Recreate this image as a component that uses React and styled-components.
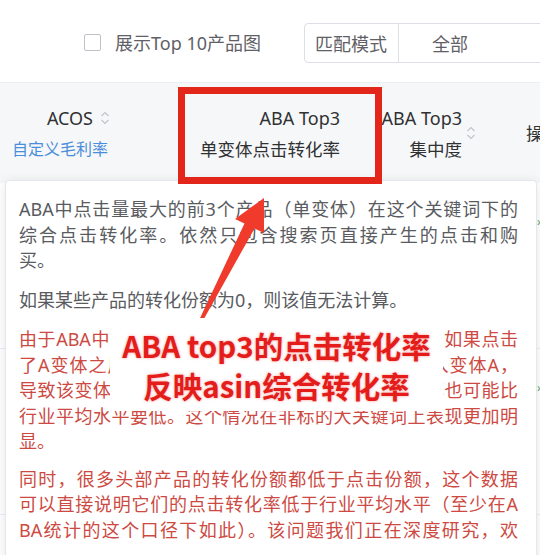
import React from "react";
import styled, { createGlobalStyle } from "styled-components";

const GlobalStyle = createGlobalStyle`
  html, body { margin: 0; padding: 0; background: #fff; }
  body { font-family: "Noto Sans", "Noto Sans CJK SC", sans-serif; }
`;

const Page = styled.div`
  position: relative;
  width: 540px;
  height: 555px;
  overflow: hidden;
  background: #fff;
`;

const Toolbar = styled.div`
  display: flex;
  align-items: center;
  height: 83px;
  box-sizing: border-box;
  padding: 3px 0 0 84px;
  border-bottom: 1px solid #eceef2;
`;

const Checkbox = styled.span`
  flex: none;
  width: 17px;
  height: 17px;
  box-sizing: border-box;
  border: 1px solid #bfc2c8;
  border-radius: 2px;
  background: #fff;
`;

const CheckLabel = styled.span`
  margin-left: 14px;
  font-size: 18px;
  line-height: 24px;
  color: #5f6166;
  white-space: nowrap;
`;

const SelectGroup = styled.div`
  flex: none;
  display: flex;
  align-items: stretch;
  margin-left: 43px;
  width: 280px;
  height: 40px;
  box-sizing: border-box;
  border: 1px solid #dcdfe6;
  border-radius: 4px;
  font-size: 18px;
  color: #5f6166;
`;

const Prefix = styled.span`
  display: flex;
  align-items: center;
  padding: 0 11px 0 10px;
  border-right: 1px solid #dcdfe6;
  white-space: nowrap;
`;

const Value = styled.span`
  display: flex;
  align-items: center;
  padding-left: 33px;
  white-space: nowrap;
`;

const Header = styled.div`
  display: flex;
  align-items: center;
  height: 100px;
  background: #f6f7f9;
  color: #303133;
`;

const HeaderCell = styled.div`
  flex: none;
  display: flex;
  align-items: center;
  justify-content: ${(p) => (p.$start ? "flex-start" : "flex-end")};
  width: ${(p) => (p.$w ? `${p.$w}px` : "auto")};
  box-sizing: border-box;
  padding-right: ${(p) => p.$pr || 0}px;
  padding-left: ${(p) => p.$pl || 0}px;
`;

const Stack = styled.div`
  display: flex;
  flex-direction: column;
  align-items: flex-end;
  gap: 7px;
`;

const TitleRow = styled.div`
  display: flex;
  align-items: center;
  gap: 7px;
`;

const HeadText = styled.span`
  font-size: ${(p) => p.$size || 18}px;
  line-height: 24px;
  white-space: nowrap;
`;

const LinkText = styled.span`
  margin-right: 2px;
  font-size: 16px;
  line-height: 24px;
  color: #4a8edb;
  white-space: nowrap;
`;

const SortWrap = styled.span`
  display: inline-flex;
  margin-left: ${(p) => p.$ml || 0}px;
`;

const Body = styled.div`
  display: flex;
  flex-direction: column;
`;

const BodyRow = styled.div`
  display: flex;
  justify-content: flex-end;
  height: 166px;
  box-sizing: border-box;
  padding-top: ${(p) => p.$pt}px;
  border-bottom: 1px solid #ebeef5;
`;

const Mark = styled.span`
  width: 3px;
  height: 10px;
  color: #5aa86a;
  font-size: 12px;
  line-height: 10px;
  overflow: hidden;
`;

const Popover = styled.div`
  position: absolute;
  left: 5px;
  top: 180px;
  width: 532px;
  height: 420px;
  box-sizing: border-box;
  background: #fff;
  border: 1px solid #e4e7ed;
  border-radius: 4px;
  box-shadow: 0 2px 12px rgba(0, 0, 0, 0.1);
  padding: 16px 18px 0 13px;
  font-family: "Noto Sans", "Noto Sans CJK SC", sans-serif;
  font-size: 18px;
  line-height: 25.5px;
`;

const Para = styled.p`
  margin: 0 0 ${(p) => p.$mb ?? 14}px;
  color: ${(p) => (p.$red ? "#cd4a43" : "#595b60")};
`;

const Line = styled.span`
  display: block;
  text-align: ${(p) => (p.$full ? "justify" : "left")};
  text-align-last: ${(p) => (p.$full ? "justify" : "auto")};
`;

const RedBox = styled.div`
  position: absolute;
  left: 178px;
  top: 87px;
  width: 204px;
  height: 97px;
  box-sizing: border-box;
  border: 7px solid #e3261a;
`;

const ArrowSvg = styled.svg`
  position: absolute;
  left: 0;
  top: 0;
  pointer-events: none;
`;

const Callout = styled.div`
  position: absolute;
  left: 110px;
  top: 318px;
  width: 333px;
  height: 93px;
  background: #fff;
  display: flex;
  flex-direction: column;
  align-items: center;
  justify-content: center;
`;

const CalloutText = styled.div`
  font-family: "Noto Sans CJK SC", sans-serif;
  font-weight: 700;
  font-size: 29.5px;
  line-height: 40px;
  color: #e41d1b;
  text-shadow: 0 0 3px rgba(235, 40, 40, 0.45);
  white-space: nowrap;
`;

const SortIcon = () => (
  <svg width="10" height="16" viewBox="0 0 10 16">
    <polyline points="1.5,6 5,2.5 8.5,6" fill="none" stroke="#c0c4cc" strokeWidth="1.2" />
    <polyline points="1.5,10 5,13.5 8.5,10" fill="none" stroke="#c0c4cc" strokeWidth="1.2" />
  </svg>
);

export default function App() {
  return (
    <Page>
      <GlobalStyle />
      <Toolbar>
        <Checkbox />
        <CheckLabel>展示Top 10产品图</CheckLabel>
        <SelectGroup>
          <Prefix>匹配模式</Prefix>
          <Value>全部</Value>
        </SelectGroup>
      </Toolbar>

      <Header>
        <HeaderCell $w={112} $pr={2}>
          <Stack>
            <TitleRow>
              <HeadText>ACOS</HeadText>
              <SortIcon />
            </TitleRow>
            <LinkText>自定义毛利率</LinkText>
          </Stack>
        </HeaderCell>
        <HeaderCell $w={230} $pr={2}>
          <Stack>
            <HeadText>ABA Top3</HeadText>
            <HeadText $size={17.5}>单变体点击转化率</HeadText>
          </Stack>
        </HeaderCell>
        <HeaderCell $w={138} $pr={4}>
          <Stack>
            <HeadText>ABA Top3</HeadText>
            <HeadText $size={17.5}>集中度</HeadText>
          </Stack>
          <SortWrap $ml={4}>
            <SortIcon />
          </SortWrap>
        </HeaderCell>
        <HeaderCell $start $pl={46}>
          <HeadText $size={17.5}>操作</HeadText>
        </HeaderCell>
      </Header>

      <Body>
        <BodyRow $pt={34}>
          <Mark>›</Mark>
        </BodyRow>
        <BodyRow $pt={34}>
          <Mark>›</Mark>
        </BodyRow>
      </Body>

      <Popover>
        <Para>
          <Line $full>ABA中点击量最大的前3个产品（单变体）在这个关键词下的</Line>
          <Line $full>综合点击转化率。依然只包含搜索页直接产生的点击和购</Line>
          <Line>买。</Line>
        </Para>
        <Para>
          <Line>如果某些产品的转化份额为0，则该值无法计算。</Line>
        </Para>
        <Para $red $mb={12}>
          <Line $full>由于ABA中只统计每个变体自身产生的点击和购买，如果点击</Line>
          <Line $full>了A变体之后却购买了同款的其他变体，则不会计入变体A，</Line>
          <Line $full>导致该变体的点击转化率被明显低估，而实际转化率也可能比</Line>
          <Line $full>行业平均水平要低。这个情况在非标的大关键词上表现更加明</Line>
          <Line>显。</Line>
        </Para>
        <Para $red>
          <Line $full>同时，很多头部产品的转化份额都低于点击份额，这个数据</Line>
          <Line $full>可以直接说明它们的点击转化率低于行业平均水平（至少在A</Line>
          <Line $full>BA统计的这个口径下如此）。该问题我们正在深度研究，欢</Line>
        </Para>
      </Popover>

      <RedBox />

      <ArrowSvg width="540" height="555" viewBox="0 0 540 555">
        <polygon
          points="264,198 264,233 254.5,228.5 200.5,325 197.5,323.5 244.5,223.5 235,219"
          fill="#ef3a2c"
        />
      </ArrowSvg>

      <Callout>
        <CalloutText>ABA top3的点击转化率</CalloutText>
        <CalloutText>反映asin综合转化率</CalloutText>
      </Callout>
    </Page>
  );
}
